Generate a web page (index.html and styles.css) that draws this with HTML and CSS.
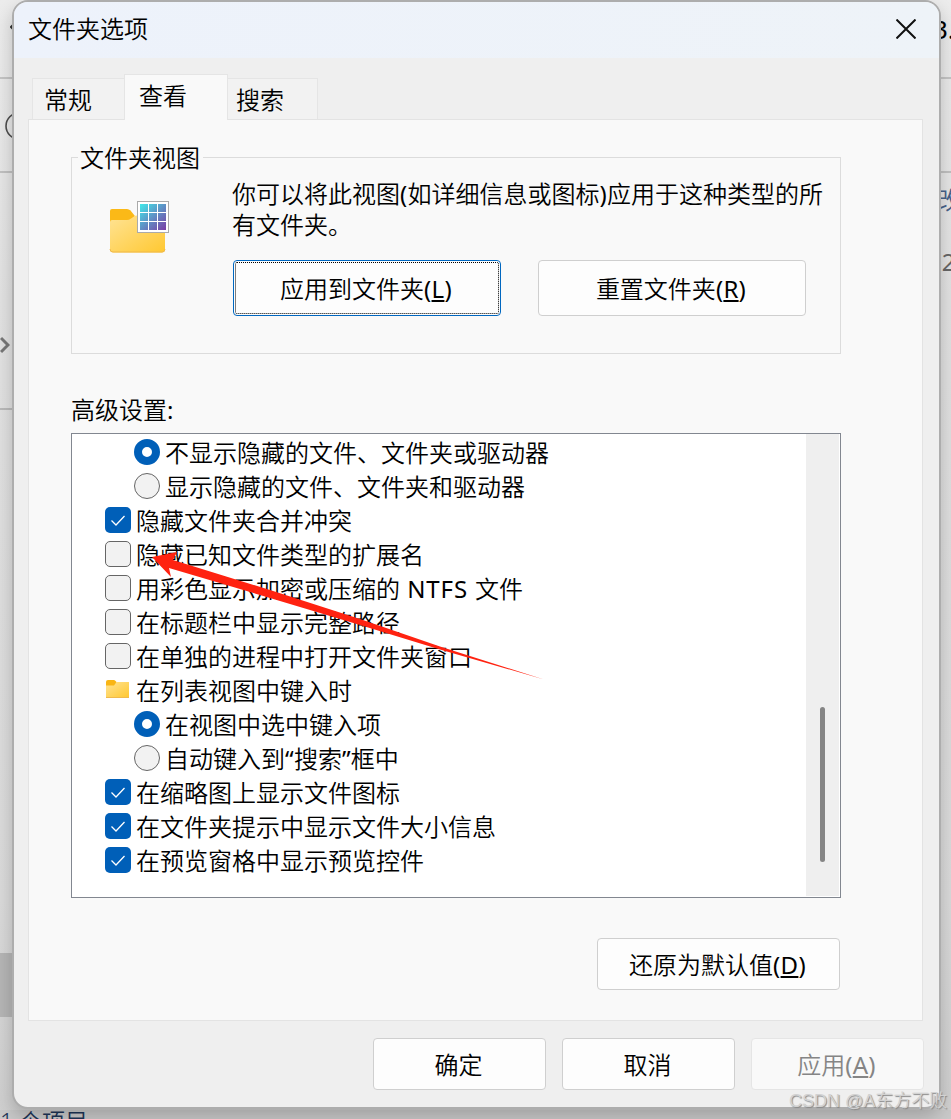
FILE: index.html
```html
<!DOCTYPE html>
<html lang="zh-CN">
<head>
    <meta charset="UTF-8">
    <meta name="viewport" content="width=device-width, initial-scale=1.0">
    <title>文件夹选项</title>
    <link rel="stylesheet" href="styles.css">
</head>
<body>
    <!-- Window behind the dialog -->
    <div class="explorer">
        <div class="explorer-tabs"><svg class="back" width="6" height="12" viewBox="0 0 6 12"><path d="M6 1 L1 6 L6 11" fill="none" stroke="#333" stroke-width="2"/></svg><span class="file-ext">3.</span></div>
        <div class="explorer-tools">
            <svg width="30" height="30" viewBox="0 0 30 30"><circle cx="15" cy="15" r="13" fill="none" stroke="#4c4c4c" stroke-width="1.6"/><path d="M8 15h14" stroke="#4a7fb5" stroke-width="1.5"/></svg>
        </div>
        <div class="explorer-body">
            <div class="nav">
                <div class="nav-top"><svg width="10" height="18" viewBox="0 0 10 18"><path d="M1 2 L8 9 L1 16" fill="none" stroke="#777" stroke-width="3"/></svg></div>
                <div class="nav-tree"><div class="nav-selected"></div></div>
            </div>
            <div class="files"><span class="col-name">改</span><span class="col-date">02</span></div>
        </div>
        <div class="status">1 个项目</div>
    </div>

    <div class="dialog">
        <div class="titlebar">
            <span>文件夹选项</span>
            <svg class="close" width="20" height="20" viewBox="0 0 20 20"><path d="M0.5 0.5 L19.5 19.5 M19.5 0.5 L0.5 19.5" stroke="#111" stroke-width="2" fill="none"/></svg>
        </div>

        <div class="tabs">
            <div class="tab tab-first">常规</div>
            <div class="tab active">查看</div>
            <div class="tab tab-last">搜索</div>
        </div>

        <div class="panel">
            <fieldset class="group">
                <legend>文件夹视图</legend>
                <svg class="folder-icon" width="60" height="54" viewBox="0 0 60 54">
                    <defs>
                        <linearGradient id="folder" x1="0" y1="0" x2="1" y2="1">
                            <stop offset="0" stop-color="#ffe394"/>
                            <stop offset="1" stop-color="#ffc831"/>
                        </linearGradient>
                        <linearGradient id="cells" gradientUnits="userSpaceOnUse" x1="31" y1="3" x2="56" y2="29">
                            <stop offset="0" stop-color="#3eeaea"/>
                            <stop offset="0.5" stop-color="#5e92c6"/>
                            <stop offset="1" stop-color="#7a3fa6"/>
                        </linearGradient>
                    </defs>
                    <path d="M1 10 q0 -2 2 -2 h15 q2 0 3.5 1.5 l4 5 v10 h-24.500z" fill="#fbb917"/>
                    <path d="M1 21 q0 -2 2 -2 h15 q2 0 4 -1.500 l3 -2 q1 -1 3 -1 h28 v34 q0 3 -3 3 h-49 q-3 0 -3 -3z" fill="url(#folder)"/>
                    <path d="M1 48 q0 3 3 3 h49 q3 0 3 -3" fill="none" stroke="#efb94d" stroke-width="1"/>
                    <rect x="28.500" y="0.500" width="31" height="31" fill="#fff" stroke="#aaa"/>
                    <path d="M31 3h8v8h-8z M40 3h8v8h-8z M49 3h8v8h-8z M31 12h8v8h-8z M40 12h8v8h-8z M49 12h8v8h-8z M31 21h8v8h-8z M40 21h8v8h-8z M49 21h8v8h-8z" fill="url(#cells)"/>
                </svg>
                <div class="group-main">
                    <p>你可以将此视图<span class="latin">(</span>如详细信息或图标<span class="latin">)</span>应用于这种类型的所有文件夹。</p>
                    <div class="group-buttons">
                        <button class="btn focused">应用到文件夹<span class="latin">(<u>L</u>)</span></button>
                        <button class="btn">重置文件夹<span class="latin">(<u>R</u>)</span></button>
                    </div>
                </div>
            </fieldset>

            <div class="list-label">高级设置<span class="latin">:</span></div>
            <div class="list">
                <ul>
                    <li class="sub"><i class="radio on"></i>不显示隐藏的文件、文件夹或驱动器</li>
                    <li class="sub"><i class="radio"></i>显示隐藏的文件、文件夹和驱动器</li>
                    <li><i class="check on"><svg viewBox="0 0 26 26"><path d="M6.500 13.500 L11 18 L19.500 9" /></svg></i>隐藏文件夹合并冲突</li>
                    <li><i class="check"></i>隐藏已知文件类型的扩展名</li>
                    <li><i class="check"></i>用彩色显示加密或压缩的<span class="latin ntfs"> NTFS </span>文件</li>
                    <li><i class="check"></i>在标题栏中显示完整路径</li>
                    <li><i class="check"></i>在单独的进程中打开文件夹窗口</li>
                    <li><svg class="small-folder" width="26" height="20" viewBox="0 0 26 20"><path d="M1 3 q0 -2 2 -2 h6 q1 0 2 1.500 l1 2 v4 h-11z" fill="#f9b514"/><path d="M1 6.500 h8 l2.500 -3.500 h12.500 v15 h-23z" fill="url(#folder)"/><path d="M1 18.500h23" stroke="#efb94d"/></svg>在列表视图中键入时</li>
                    <li class="sub"><i class="radio on"></i>在视图中选中键入项</li>
                    <li class="sub"><i class="radio"></i>自动键入到<span class="latin">“</span>搜索<span class="latin">”</span>框中</li>
                    <li><i class="check on"><svg viewBox="0 0 26 26"><path d="M6.500 13.500 L11 18 L19.500 9" /></svg></i>在缩略图上显示文件图标</li>
                    <li><i class="check on"><svg viewBox="0 0 26 26"><path d="M6.500 13.500 L11 18 L19.500 9" /></svg></i>在文件夹提示中显示文件大小信息</li>
                    <li><i class="check on"><svg viewBox="0 0 26 26"><path d="M6.500 13.500 L11 18 L19.500 9" /></svg></i>在预览窗格中显示预览控件</li>
                </ul>
                <div class="scrollbar"><div class="thumb"></div></div>
            </div>

            <button class="btn restore">还原为默认值<span class="latin">(<u>D</u>)</span></button>
        </div>

        <div class="actions">
            <button class="btn">确定</button>
            <button class="btn">取消</button>
            <button class="btn" disabled>应用<span class="latin">(<u>A</u>)</span></button>
        </div>
    </div>

    <!-- Arrow pointing at the file extension option -->
    <svg class="arrow" width="400" height="135" viewBox="0 0 400 135">
        <path d="M0 6 L25 1 L21 9 L118 39 L208 68 L288 95.500 L392 128.500 L288 98.500 L208 74 L118 47 L17 17 L19 26 Z" fill="#ff2210"/>
    </svg>
    <div class="watermark">CSDN @A东方不败</div>
</body>
</html>
```

FILE: styles.css
```css
/* General Styles */
* {
    box-sizing: border-box;
}

body {
    margin: 0;
    height: 1119px;
    position: relative;
    overflow: hidden;
    font-family: "Noto Sans", "Noto Sans CJK SC", sans-serif;
    font-size: 24px;
    font-weight: 350;
    line-height: 34px;
    color: #000;
    background: #dcdcdc;
}

/* Latin letters and punctuation need the regular weight */
.latin {
    font-weight: 400;
    letter-spacing: 0.3px;
}

/* Explorer window */
.explorer {
    height: 1119px;
    display: flex;
    flex-direction: column;
    background: linear-gradient(#ececec, #e2e2e2 300px, #dadada 900px, #cfcfcf);
}

.explorer-tabs {
    height: 79px;
    padding: 12px 0 0 10px;
    display: flex;
    justify-content: space-between;
    border-bottom: 2px solid #c4c4c4;
}

.back {
    margin-top: 9px;
}

.file-ext {
    width: 20px;
    margin-right: -2px;
    font-size: 26px;
    font-weight: 400;
}

.explorer-tools {
    height: 94px;
    padding: 32px 0 0 4px;
    border-bottom: 2px solid #c0c0c0;
}

.explorer-body {
    height: 937px;
    display: flex;
    justify-content: space-between;
}

.nav {
    width: 40px;
}

.nav-top {
    height: 237px;
    padding-top: 163px;
    border-bottom: 2px solid #b9b9b9;
}

.nav-top svg {
    display: block;
}

.nav-tree {
    padding-top: 543px;
}

.nav-selected {
    height: 64px;
    background: #b5b5b5;
}

.files {
    width: 20px;
    display: flex;
    flex-direction: column;
    padding-top: 10px;
    gap: 28px;
    white-space: nowrap;
}

.col-name {
    margin-left: 5px;
    color: #47628a;
}

.col-date {
    margin-left: -3px;
    font-weight: 400;
    color: #666;
}

.status {
    height: 9px;
    line-height: 23px;
    font-size: 23px;
    overflow: hidden;
    color: #1d3557;
    background: #c9c9c9;
}

/* Dialog */
.dialog {
    position: absolute;
    left: 12px;
    top: 0;
    width: 929px;
    height: 1109px;
    border: 2px solid #adadad;
    border-radius: 16px;
    background: #efefef;
    box-shadow: 0 8px 18px rgba(0, 0, 0, 0.2);
    overflow: hidden;
}

.titlebar {
    height: 56px;
    padding: 0 23px 2px 14px;
    display: flex;
    align-items: center;
    justify-content: space-between;
    background: linear-gradient(90deg, #edf2fb, #eef3f8);
}

.tabs {
    height: 61px;
    padding-left: 18px;
    display: flex;
    align-items: flex-end;
}

.tab {
    height: 41px;
    padding: 4px 0 0 11px;
    border: 1px solid #e5e5e5;
    border-bottom: none;
    background: #f2f2f2;
}

.tab-first {
    width: 92px;
    border-right: none;
}

.tab-last {
    width: 90px;
    padding-left: 8px;
    border-left: none;
}

.tab.active {
    width: 104px;
    height: 46px;
    margin-bottom: -1px;
    padding: 4px 0 0 14px;
    background: #f9f9f9;
    z-index: 1;
}

.panel {
    width: 895px;
    height: 902px;
    margin-left: 14px;
    padding: 20px 81px 0 42px;
    border: 1px solid #e3e3e3;
    background: #f9f9f9;
    display: flex;
    flex-direction: column;
}

/* Folder views group */
.group {
    height: 214px;
    margin: 0;
    padding: 0 0 0 37px;
    border: 1px solid #dcdcdc;
    display: flex;
}

legend {
    margin-left: -31px;
    padding: 1px 3px 0 2px;
    height: 34px;
}

.folder-icon {
    flex: none;
    margin-top: 27px;
    margin-right: 63px;
}

.group-main {
    flex: 1;
}

.group-main p {
    width: 600px;
    margin: 4px 0 20px;
    line-height: 31px;
}

.group-buttons {
    display: flex;
    gap: 37px;
    margin-left: 1px;
}

.btn {
    width: 173px;
    height: 52px;
    padding: 1px 2px 0 0;
    font: inherit;
    color: #000;
    background: #fdfdfd;
    border: 1px solid #cfcfcf;
    border-radius: 4px;
}

.btn u {
    text-decoration-thickness: 2px;
    text-underline-offset: 2px;
}

.group-buttons .btn {
    width: 268px;
    height: 56px;
}

.btn.focused {
    border-color: #0067c0;
    outline: 1px dotted #000;
    outline-offset: -3px;
}

.btn:disabled {
    color: #858585;
    background: #f9f9f9;
    border-color: #e5e5e5;
}

/* Advanced settings */
.list-label {
    margin: 39px 0 6px;
}

.list {
    height: 465px;
    display: flex;
    justify-content: space-between;
    background: #fff;
    border: 1px solid #828790;
    padding-right: 1px;
}

ul {
    list-style: none;
    margin: 0;
    padding: 1px 0 0 33px;
}

li {
    height: 34px;
    padding-top: 2px;
    display: flex;
    align-items: center;
    white-space: pre;
}

li.sub {
    padding-left: 29px;
}

.ntfs {
    letter-spacing: 0.9px;
}

.radio, .check {
    flex: none;
    width: 26px;
    height: 26px;
    margin: -2px 5px 0 0;
    border: 1.5px solid #666;
    background: #f2f2f2;
}

.radio {
    border-radius: 50%;
}

.check {
    border-radius: 5px;
}

.radio.on {
    border: 8px solid #005fb8;
    background: #fff;
}

.check.on {
    border: none;
    background: #005fb8;
}

.check svg {
    display: block;
    fill: none;
    stroke: #fff;
    stroke-width: 1.3;
}

.small-folder {
    margin-right: 5px;
    margin-top: -5px;
}

.scrollbar {
    width: 33px;
    margin-bottom: 1px;
    padding: 273px 0 0 14px;
    background: #efefef;
}

.thumb {
    width: 5px;
    height: 155px;
    border-radius: 3px;
    background: #858585;
}

.btn.restore {
    width: 243px;
    flex: none;
    align-self: flex-end;
    margin: 40px 1px 0 0;
}

.actions {
    display: flex;
    justify-content: flex-end;
    gap: 16px;
    padding: 17px 15px 0 0;
}

/* Overlays */
.arrow {
    position: absolute;
    left: 152px;
    top: 551px;
}

.watermark {
    position: absolute;
    left: 789px;
    top: 1089px;
    font-family: "Liberation Sans", "Noto Sans CJK SC", sans-serif;
    font-size: 18px;
    line-height: 24px;
    white-space: nowrap;
    color: #d2d2d2;
    text-shadow: 1px 1px 1px #888;
}
```
